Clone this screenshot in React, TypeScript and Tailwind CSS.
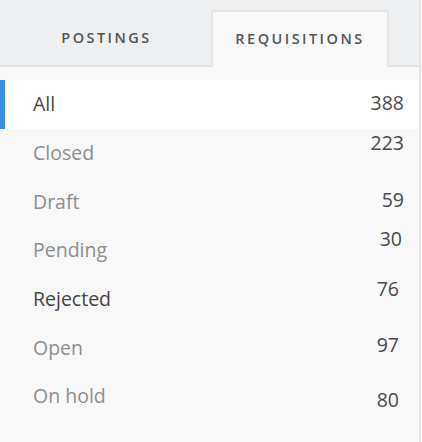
import React from "react";

type Row = {
  label: string;
  count: string;
  dark: boolean;
  active?: boolean;
  numCls: string;
};

const rows: Row[] = [
  { label: "All", count: "388", dark: true, active: true, numCls: "mb-[2px]" },
  { label: "Closed", count: "223", dark: false, numCls: "mb-[20px]" },
  { label: "Draft", count: "59", dark: false, numCls: "mb-[3px]" },
  { label: "Pending", count: "30", dark: false, numCls: "mb-[23px] mr-[2px]" },
  { label: "Rejected", count: "76", dark: true, numCls: "mb-[20px] mr-[5px]" },
  { label: "Open", count: "97", dark: false, numCls: "mb-[5px] mr-[5px]" },
  { label: "On hold", count: "80", dark: false, numCls: "mt-[7px] mr-[5px]" },
];

export default function App() {
  return (
    <div
      className="w-[421px] h-[442px] bg-[#f8f8f8] border-r-2 border-[#e4e5e7] flex flex-col"
      style={{ fontFamily: '"Open Sans", "Noto Sans", sans-serif' }}
    >
      <div className="h-[67px] bg-[#eeeff1] border-b-2 border-[#e4e5e7] flex items-end pl-[18px] gap-[16px] shrink-0">
        <div className="w-[177px] h-[55px] flex items-center justify-center text-[14.5px] font-semibold tracking-[0.17em] text-[#555555]">
          POSTINGS
        </div>
        <div className="w-[178px] h-[57px] -mb-[2px] bg-[#f8f8f8] border-t-2 border-x-2 border-[#e4e5e7] rounded-t-[4px] flex items-center justify-center pb-[2px] text-[14.5px] font-semibold tracking-[0.17em] text-[#555555]">
          REQUISITIONS
        </div>
      </div>
      <div className="pt-[13px] flex flex-col">
        {rows.map((r) => (
          <div
            key={r.label}
            className={
              r.active
                ? "h-[48.67px] flex items-center justify-between bg-white border-l-[5px] border-[#3b8fe9] pl-[28px] pr-[15px]"
                : "h-[48.67px] flex items-center justify-between border-l-[5px] border-transparent pl-[28px] pr-[15px]"
            }
          >
            <span
              className={
                r.dark
                  ? "text-[19.5px] leading-[26px] text-[#454545]"
                  : "text-[19.5px] leading-[26px] text-[#8d8d8d]"
              }
            >
              {r.label}
            </span>
            <span className={"text-[19.5px] leading-[26px] text-[#4a4a4a] " + r.numCls}>
              {r.count}
            </span>
          </div>
        ))}
      </div>
    </div>
  );
}
